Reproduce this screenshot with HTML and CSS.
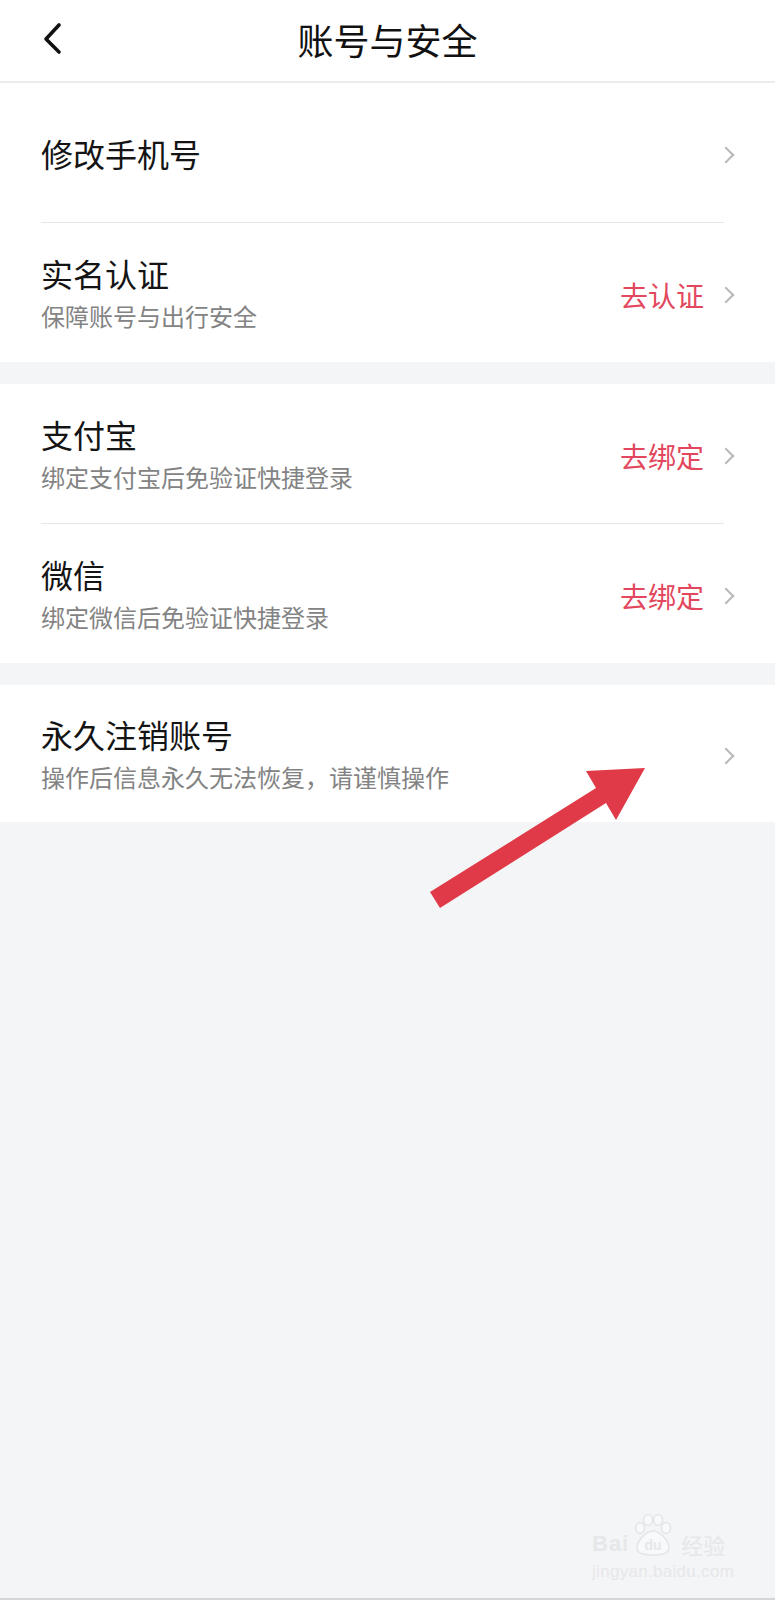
FILE: index.html
```html
<!DOCTYPE html>
<html lang="zh-CN">
<head>
  <meta charset="UTF-8" />
  <meta name="viewport" content="width=device-width, initial-scale=1.0"/>
  <title>账号与安全</title>
  <link rel="stylesheet" href="styles.css">
</head>
<body>
  <div class="page">
    <header class="topbar">
      <svg class="back" width="22" height="34" viewBox="0 0 22 34"><path d="M17 4 L4 18 L17 31" fill="none" stroke="#111" stroke-width="3.6" stroke-linecap="round" stroke-linejoin="round"/></svg>
      <h1>账号与安全</h1>
    </header>

    <section class="group">
      <div class="row">
        <div class="info"><div class="name">修改手机号</div></div>
        <span class="chev"></span>
      </div>
      <div class="row">
        <div class="info">
          <div class="name">实名认证</div>
          <div class="desc">保障账号与出行安全</div>
        </div>
        <span class="action">去认证</span>
        <span class="chev"></span>
      </div>
    </section>

    <section class="group">
      <div class="row">
        <div class="info">
          <div class="name">支付宝</div>
          <div class="desc">绑定支付宝后免验证快捷登录</div>
        </div>
        <span class="action">去绑定</span>
        <span class="chev"></span>
      </div>
      <div class="row">
        <div class="info">
          <div class="name">微信</div>
          <div class="desc">绑定微信后免验证快捷登录</div>
        </div>
        <span class="action">去绑定</span>
        <span class="chev"></span>
      </div>
    </section>

    <section class="group">
      <div class="row last">
        <div class="info">
          <div class="name">永久注销账号</div>
          <div class="desc">操作后信息永久无法恢复，请谨慎操作</div>
        </div>
        <span class="chev"></span>
      </div>
    </section>

    <!-- annotation arrow -->
    <svg class="arrow" width="235" height="155" viewBox="0 0 235 155">
      <polygon points="10,132 176,28 166,11 225,8 196,60 186,43 20,148" fill="#e03a48"/>
    </svg>

    <div class="watermark">
      <div class="wm-logo">
        <span class="wm-bai">Bai</span>
        <svg class="wm-paw" width="44" height="42" viewBox="0 0 44 42">
          <g fill="#f8f9fa" stroke="#e4e5e7" stroke-width="1.5">
            <ellipse cx="9" cy="14" rx="4.5" ry="5.5"/>
            <ellipse cx="17" cy="6" rx="4.5" ry="5.5"/>
            <ellipse cx="27" cy="6" rx="4.5" ry="5.5"/>
            <ellipse cx="35" cy="14" rx="4.5" ry="5.5"/>
            <path d="M22 17 C14 17 6 28 6 34 C6 39 11 41 22 41 C33 41 38 39 38 34 C38 28 30 17 22 17 Z"/>
          </g>
          <text x="22" y="36" text-anchor="middle" font-family="Liberation Sans, sans-serif" font-weight="bold" font-size="14" fill="#e6e7e9">du</text>
        </svg>
        <span class="wm-jy">经验</span>
      </div>
      <div class="wm-url">jingyan.baidu.com</div>
    </div>
  </div>
</body>
</html>
```

FILE: styles.css
```css
* { box-sizing: border-box; }
body {
  margin: 0;
  background-color: #f4f5f7;
  font-family: "Noto Sans CJK SC", "Noto Sans", sans-serif;
  color: #141414;
}
.page {
  position: relative;
  width: 775px;
  height: 1600px;
  overflow: hidden;
  border-bottom: 2px solid #d6d6d8;
}
.topbar {
  background: #fff;
  height: 83px;
  border-bottom: 2px solid #ececec;
  display: flex;
  align-items: center;
  justify-content: center;
  position: relative;
}
.topbar h1 {
  margin: 0;
  font-size: 36px;
  font-weight: 400;
  color: #111;
  line-height: 1;
  margin-top: -4px;
}
.back {
  position: absolute;
  left: 42px;
  top: 21px;
}
.group {
  background: #fff;
  margin-bottom: 22px;
}
.row {
  height: 139px;
  display: flex;
  align-items: center;
  padding: 0 40px 0 41px;
  position: relative;
}
.row + .row::before {
  content: "";
  position: absolute;
  top: -1px;
  left: 41px;
  right: 51px;
  height: 1px;
  background: #e6e6e6;
}
.row + .row { margin-top: 1px; }
.row.last { height: 137px; }
.info {
  flex: 1;
}
.name {
  font-size: 32px;
  line-height: 42px;
  color: #141414;
}
.desc {
  font-size: 24px;
  line-height: 34px;
  color: #838383;
  margin-top: 5px;
}
.action {
  font-size: 28px;
  color: #e2475d;
  margin-right: 16px;
  margin-top: 4px;
}
.chev {
  width: 12px;
  height: 12px;
  border-top: 2px solid #b9b9b9;
  border-right: 2px solid #b9b9b9;
  transform: rotate(45deg);
  margin-right: 3px;
  margin-top: 4px;
}
.arrow {
  position: absolute;
  left: 420px;
  top: 760px;
}
.watermark {
  position: absolute;
  left: 592px;
  top: 1514px;
  color: #e6e7e9;
}
.wm-logo {
  display: flex;
  align-items: flex-end;
  gap: 2px;
}
.wm-bai {
  font-family: "Liberation Sans", sans-serif;
  font-weight: bold;
  font-size: 22px;
  line-height: 1;
  letter-spacing: 1px;
  margin-bottom: 1px;
}
.wm-jy {
  font-size: 22px;
  line-height: 1;
  margin-left: 4px;
  margin-bottom: 1px;
}
.wm-url {
  font-family: "Liberation Sans", sans-serif;
  font-size: 17px;
  margin-top: 6px;
  letter-spacing: 0.3px;
}
```
